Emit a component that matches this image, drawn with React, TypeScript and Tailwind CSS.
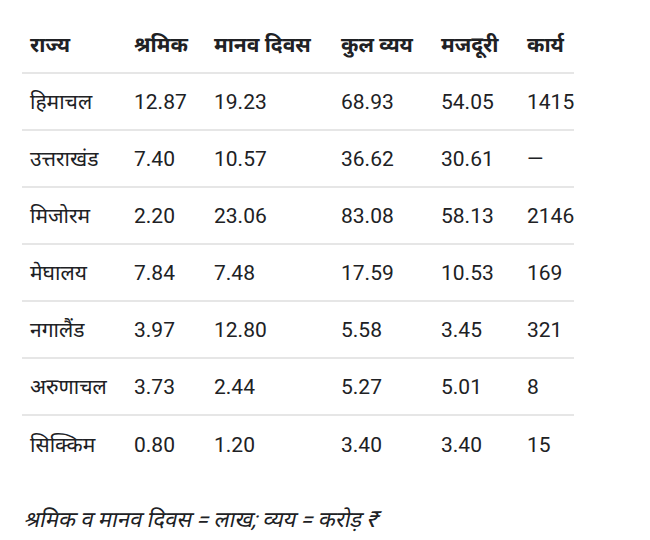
const rows = [
  ["हिमाचल", "12.87", "19.23", "68.93", "54.05", "1415"],
  ["उत्तराखंड", "7.40", "10.57", "36.62", "30.61", "—"],
  ["मिजोरम", "2.20", "23.06", "83.08", "58.13", "2146"],
  ["मेघालय", "7.84", "7.48", "17.59", "10.53", "169"],
  ["नगालैंड", "3.97", "12.80", "5.58", "3.45", "321"],
  ["अरुणाचल", "3.73", "2.44", "5.27", "5.01", "8"],
  ["सिक्किम", "0.80", "1.20", "3.40", "3.40", "15"],
];

const headers = ["राज्य", "श्रमिक", "मानव दिवस", "कुल व्यय", "मजदूरी", "कार्य"];

const cols = "grid grid-cols-[104px_80px_127px_100px_86px_56px]";

export default function App() {
  return (
    <div className="min-h-[540px] w-[650px] bg-white pt-[17px] pl-[22px] font-['Roboto','Noto_Sans',sans-serif] text-[21px] leading-[28px] text-[#202124]">
      <div className="w-[552px]">
        <div className={`${cols} h-[57px] items-center border-b-2 border-[#e6e6e6] font-bold`}>
          {headers.map((h) => (
            <div key={h} className="pl-2 whitespace-nowrap">
              {h}
            </div>
          ))}
        </div>
        {rows.map((r, i) => (
          <div
            key={r[0]}
            className={`${cols} h-[57px] items-center ${
              i < rows.length - 1 ? "border-b-2 border-[#e6e6e6]" : ""
            }`}
          >
            {r.map((c, j) => (
              <div key={j} className="pl-2 whitespace-nowrap">
                {c}
              </div>
            ))}
          </div>
        ))}
      </div>
      <p className="mt-[33px] text-[22px] leading-[28px] italic">
        <span className="inline-block origin-bottom-left -skew-x-12">
          श्रमिक व मानव दिवस = लाख; व्यय = करोड़ ₹
        </span>
      </p>
    </div>
  );
}
